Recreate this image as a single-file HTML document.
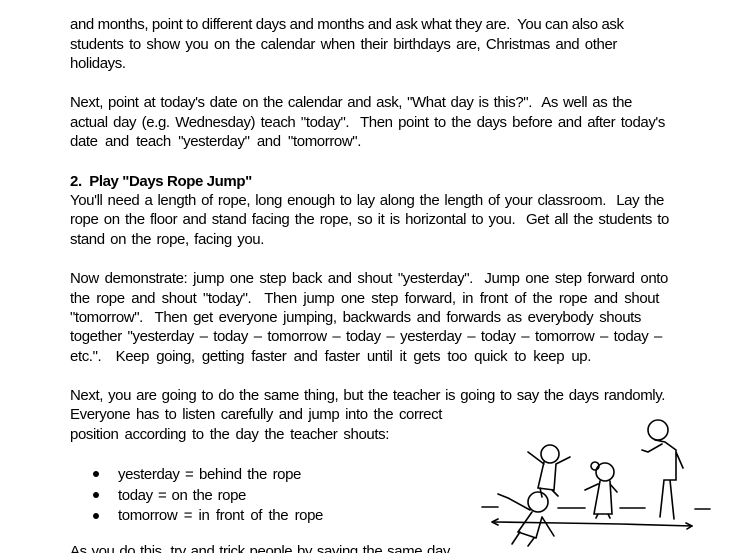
<!DOCTYPE html>
<html><head><meta charset="utf-8"><style>
html,body{margin:0;padding:0;background:#fff;width:735px;height:553px;overflow:hidden;position:relative}
.l{position:absolute;left:70px;font-family:"Liberation Sans",sans-serif;font-size:15px;line-height:20px;color:#000;white-space:nowrap;text-align:justify;text-align-last:justify;letter-spacing:-0.4px}
.b{font-weight:bold}
.dot{position:absolute;left:93px;width:6px;height:6px;border-radius:50%;background:#000}
</style></head><body>
<div class="l" style="top:15px;width:547px">and months, point to different days and months and ask what they are.&nbsp; You can also ask</div>
<div class="l" style="top:35px;width:547px">students to show you on the calendar when their birthdays are, Christmas and other</div>
<div class="l" style="top:54px;width:57px">holidays.</div>
<div class="l" style="top:93px;width:562px">Next, point at today's date on the calendar and ask, "What day is this?".&nbsp; As well as the</div>
<div class="l" style="top:113px;width:595px">actual day (e.g. Wednesday) teach "today".&nbsp; Then point to the days before and after today's</div>
<div class="l" style="top:132px;width:291px">date and teach "yesterday" and "tomorrow".</div>
<div class="l b" style="top:172px;width:179px">2.&nbsp; Play "Days Rope Jump"</div>
<div class="l" style="top:191px;width:594px">You'll need a length of rope, long enough to lay along the length of your classroom.&nbsp; Lay the</div>
<div class="l" style="top:210px;width:599px">rope on the floor and stand facing the rope, so it is horizontal to you.&nbsp; Get all the students to</div>
<div class="l" style="top:230px;width:194px">stand on the rope, facing you.</div>
<div class="l" style="top:269px;width:598px">Now demonstrate: jump one step back and shout "yesterday".&nbsp; Jump one step forward onto</div>
<div class="l" style="top:289px;width:589px">the rope and shout "today".&nbsp; Then jump one step forward, in front of the rope and shout</div>
<div class="l" style="top:308px;width:571px">"tomorrow".&nbsp; Then get everyone jumping, backwards and forwards as everybody shouts</div>
<div class="l" style="top:327px;width:592px">together "yesterday – today – tomorrow – today – yesterday – today – tomorrow – today –</div>
<div class="l" style="top:347px;width:521px">etc.".&nbsp; Keep going, getting faster and faster until it gets too quick to keep up.</div>
<div class="l" style="top:386px;width:595px">Next, you are going to do the same thing, but the teacher is going to say the days randomly.</div>
<div class="l" style="top:405px;width:372px">Everyone has to listen carefully and jump into the correct</div>
<div class="l" style="top:425px;width:319px">position according to the day the teacher shouts:</div>
<div class="dot" style="top:471px"></div><div class="l" style="left:118px;top:465px;width:183px">yesterday = behind the rope</div>
<div class="dot" style="top:492px"></div><div class="l" style="left:118px;top:486px;width:128px">today = on the rope</div>
<div class="dot" style="top:513px"></div><div class="l" style="left:118px;top:506px;width:205px">tomorrow = in front of the rope</div>
<div class="l" style="top:542px;width:380px">As you do this, try and trick people by saying the same day</div>
<svg style="position:absolute;left:470px;top:402px" width="265" height="151" fill="none" stroke="#000" stroke-width="1.6" stroke-linecap="round">
<line x1="12" y1="105" x2="28" y2="105"/><line x1="88" y1="106" x2="115" y2="106"/><line x1="150" y1="106" x2="175" y2="106"/><line x1="225" y1="107" x2="240" y2="107"/>
<path d="M25 120 L90 121 L150 122 L222 124"/><path d="M22 120 l6 -3 M22 120 l6 3 M222 124 l-6 -3 M222 124 l-5 3"/>
<circle cx="80" cy="52" r="9"/><path d="M74 60 L68 86 L84 88 L86 62 M74 62 L58 50 M86 62 L100 55 M70 86 L72 95 M82 88 L88 94"/>
<circle cx="68" cy="100" r="10"/><path d="M60 108 L38 96 L28 92 M62 110 L48 130 L66 136 L72 115 M72 115 L84 134 M50 130 L42 142 M64 136 L58 144"/>
<circle cx="135" cy="70" r="9"/><circle cx="125" cy="64" r="4"/><path d="M130 79 L124 112 L142 112 L140 79 M128 82 L115 88 M140 82 L147 90 M128 112 L126 116 M138 112 L140 116"/>
<circle cx="188" cy="28" r="10"/><path d="M185 38 L195 40 L206 48 L206 78 L194 78 L190 115 M200 78 L204 117 M192 42 L178 50 L172 48 M206 50 L213 66"/>
</svg>
</body></html>
